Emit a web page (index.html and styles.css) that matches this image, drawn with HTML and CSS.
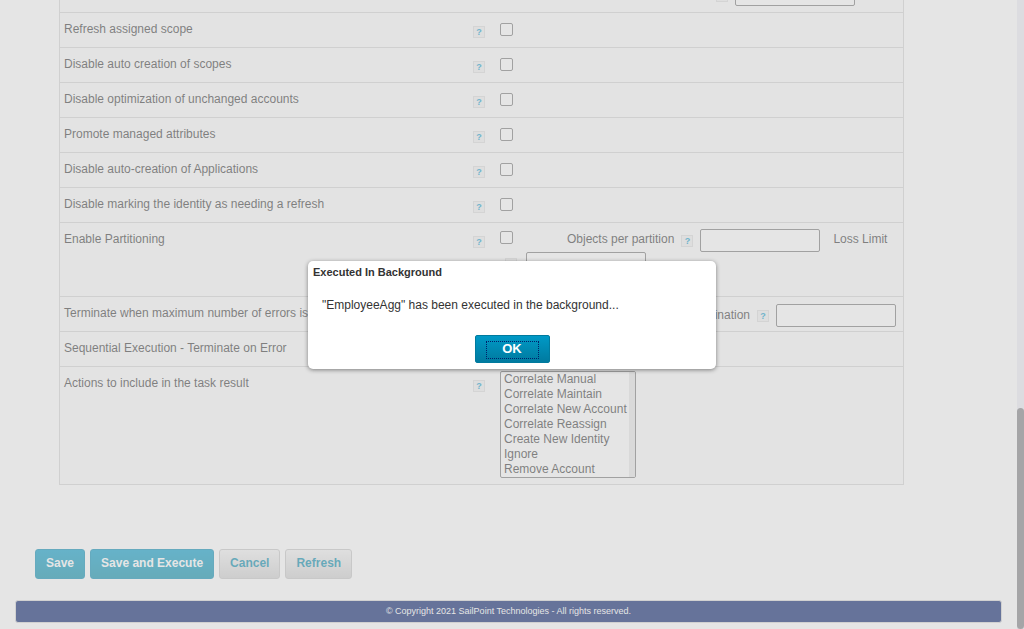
FILE: index.html
```html
<!DOCTYPE html>
<html lang="en">
<head>
  <meta charset="UTF-8">
  <title>Edit Task</title>
  <link rel="stylesheet" href="styles.css">
</head>
<body>

  <div class="page">
    <div class="content">
      <div class="form-table">
        <!-- row scrolled off the top -->
        <div class="row row-cut">
          <div class="label"></div>
          <div class="help-cell"><span class="help"></span></div>
          <div class="field field-cut">
            <span class="help"></span>
            <input type="text" class="text-input">
          </div>
        </div>

        <div class="row">
          <div class="label">Refresh assigned scope</div>
          <div class="help-cell"><span class="help">?</span></div>
          <div class="field"><input type="checkbox" class="check"></div>
        </div>
        <div class="row">
          <div class="label">Disable auto creation of scopes</div>
          <div class="help-cell"><span class="help">?</span></div>
          <div class="field"><input type="checkbox" class="check"></div>
        </div>
        <div class="row">
          <div class="label">Disable optimization of unchanged accounts</div>
          <div class="help-cell"><span class="help">?</span></div>
          <div class="field"><input type="checkbox" class="check"></div>
        </div>
        <div class="row">
          <div class="label">Promote managed attributes</div>
          <div class="help-cell"><span class="help">?</span></div>
          <div class="field"><input type="checkbox" class="check"></div>
        </div>
        <div class="row">
          <div class="label">Disable auto-creation of Applications</div>
          <div class="help-cell"><span class="help">?</span></div>
          <div class="field"><input type="checkbox" class="check"></div>
        </div>
        <div class="row">
          <div class="label">Disable marking the identity as needing a refresh</div>
          <div class="help-cell"><span class="help">?</span></div>
          <div class="field"><input type="checkbox" class="check"></div>
        </div>

        <div class="row row-partition">
          <div class="label">Enable Partitioning</div>
          <div class="help-cell"><span class="help">?</span></div>
          <div class="field field-partition">
            <div class="line">
              <input type="checkbox" class="check">
              <span class="opt-label opt-objects">Objects per partition</span>
              <span class="help">?</span>
              <input type="text" class="text-input">
              <span class="opt-label opt-loss">Loss Limit</span>
            </div>
            <div class="line line-second">
              <span class="help">?</span>
              <input type="text" class="text-input">
            </div>
          </div>
        </div>

        <div class="row row-terminate">
          <div class="label">Terminate when maximum number of errors is reached</div>
          <div class="help-cell"><span class="help">?</span></div>
          <div class="field field-terminate">
            <span class="opt-label">Maximum errors before termination</span>
            <span class="help">?</span>
            <input type="text" class="text-input">
          </div>
        </div>
        <div class="row">
          <div class="label">Sequential Execution - Terminate on Error</div>
          <div class="help-cell"><span class="help">?</span></div>
          <div class="field"><input type="checkbox" class="check"></div>
        </div>
        <div class="row row-actions">
          <div class="label">Actions to include in the task result</div>
          <div class="help-cell"><span class="help">?</span></div>
          <div class="field">
            <div class="listbox">
              <div class="options">
                <div>Correlate Manual</div>
                <div>Correlate Maintain</div>
                <div>Correlate New Account</div>
                <div>Correlate Reassign</div>
                <div>Create New Identity</div>
                <div>Ignore</div>
                <div>Remove Account</div>
              </div>
              <div class="list-scroll"></div>
            </div>
          </div>
        </div>
      </div>

      <div class="buttons">
        <button class="btn btn-primary">Save</button>
        <button class="btn btn-primary">Save and Execute</button>
        <button class="btn btn-plain">Cancel</button>
        <button class="btn btn-plain">Refresh</button>
      </div>

      <div class="footer">© Copyright 2021 SailPoint Technologies - All rights reserved.</div>
    </div>

    <div class="mask"></div>

    <div class="dialog">
      <div class="dialog-title">Executed In Background</div>
      <div class="dialog-msg">"EmployeeAgg" has been executed in the background...</div>
      <div class="dialog-actions">
        <button class="ok-btn"><span class="ok-focus">OK</span></button>
      </div>
    </div>
  </div>

  <div class="scrollbar"><div class="thumb"></div></div>

</body>
</html>
```

FILE: styles.css
```css
html, body {
  height: 100%;
}

body {
  margin: 0;
  display: flex;
  overflow: hidden;
  font-family: "Liberation Sans", Arial, sans-serif;
  font-size: 12px;
  color: #333;
  background: #fff;
}

.page {
  position: relative;
  flex: 1;
  height: 629px;
  overflow: hidden;
}

.content {
  padding-left: 15px;
  padding-right: 15px;
}

/* form table */
.form-table {
  width: 845px;
  margin-left: 44px;
  border-left: 1px solid #d4d4d4;
  border-right: 1px solid #d4d4d4;
  background: #fbfbfb;
  box-sizing: border-box;
}

.row {
  display: flex;
  height: 35px;
  box-sizing: border-box;
  border-bottom: 1px solid #d4d4d4;
}

.row-cut {
  height: 13px;
  overflow: hidden;
  align-items: flex-end;
}

.row-partition {
  height: 74px;
}

.row-actions {
  height: 118px;
}

.label {
  width: 409px;
  padding: 9px 0 0 4px;
  box-sizing: border-box;
  white-space: nowrap;
  overflow: hidden;
}

.row-cut .label {
  padding: 0;
}

.help-cell {
  flex: 0 0 31px;
  padding-top: 13px;
  padding-left: 4px;
  box-sizing: border-box;
}

.row-cut .help-cell {
  padding: 0 0 10px 4px;
}

.help {
  display: inline-block;
  vertical-align: top;
  flex: none;
  width: 10px;
  height: 10px;
  border: 1px solid #ddd;
  background: #f0f0f0;
  color: #0a9ccc;
  font-size: 9px;
  font-weight: bold;
  line-height: 11px;
  text-align: center;
}

.field {
  flex: 1;
  display: flex;
}

.field-cut {
  align-items: flex-end;
  padding-left: 216px;
  gap: 7px;
}

.field-cut .help {
  margin-bottom: 10px;
}

.field-cut .text-input {
  margin-bottom: 6px;
}

.check {
  appearance: none;
  width: 13px;
  height: 13px;
  margin: 10px 0 0;
  border: 1px solid #767676;
  border-radius: 2px;
  background: #fff;
}

.text-input {
  width: 120px;
  height: 23px;
  box-sizing: border-box;
  margin: 0;
  border: 1px solid #767676;
  border-radius: 2px;
  background: #fff;
  flex: none;
}

.field-partition {
  flex-direction: column;
}

.line {
  display: flex;
  align-items: flex-start;
}

.line .check {
  margin-top: 8px;
}

.opt-label {
  white-space: nowrap;
}

.opt-objects {
  margin: 9px 0 0 54px;
}

.line .help {
  margin: 12px 7px 0 7px;
}

.line .text-input {
  margin-top: 6px;
}

.opt-loss {
  margin: 9px 0 0 13px;
}

.line-second .help {
  margin: 6px 9px 0 5px;
}

.line-second .text-input {
  margin-top: 0;
}

.field-terminate {
  justify-content: flex-end;
  padding: 7px 7px 0 0;
  align-items: flex-start;
}

.field-terminate .opt-label {
  margin-top: 4px;
}

.field-terminate .help {
  margin: 6px 7px 0;
}

.listbox {
  display: flex;
  width: 136px;
  height: 107px;
  margin-top: 4px;
  box-sizing: border-box;
  border: 1px solid #767676;
  border-radius: 2px;
  background: #fff;
  overflow: hidden;
}

.options {
  flex: 1;
  padding-left: 3px;
  line-height: 15px;
  white-space: nowrap;
  overflow: hidden;
}

.list-scroll {
  flex: 0 0 6px;
  background: #e6e6e6;
}

/* bottom buttons */
.buttons {
  display: flex;
  gap: 5px;
  margin: 64px 0 0 20px;
}

.btn {
  height: 30px;
  padding: 0 10px 2px;
  border-radius: 3px;
  font-family: inherit;
  font-size: 12px;
  font-weight: bold;
}

.btn-primary {
  color: #fff;
  border: 1px solid #0088b0;
  background: linear-gradient(to bottom, #0099c6, #008ba8);
}

.btn-plain {
  color: #0087a8;
  border: 1px solid #c4c4c4;
  background: linear-gradient(to bottom, #f2f2f2, #cfcfcf);
}

.footer {
  height: 23px;
  margin-top: 21px;
  box-sizing: border-box;
  border: 1px solid #d6d6d6;
  border-radius: 3px;
  background: #001a68;
  color: #fff;
  font-size: 9px;
  line-height: 21px;
  text-align: center;
}

/* modal */
.mask {
  position: absolute;
  inset: 0;
  background: #ccc;
  opacity: 0.5;
}

.dialog {
  position: absolute;
  left: 308px;
  top: 261px;
  width: 408px;
  height: 108px;
  border-radius: 5px;
  background: #fff;
  box-shadow: 0 1px 4px rgba(0, 0, 0, 0.45);
}

.dialog-title {
  padding: 5px 0 0 5px;
  font-size: 11px;
  font-weight: bold;
}

.dialog-msg {
  margin-top: 20px;
  padding-left: 14px;
}

.dialog-actions {
  display: flex;
  justify-content: center;
  margin-top: 23px;
}

.ok-btn {
  width: 75px;
  height: 28px;
  padding: 0;
  border: 1px solid #007a9e;
  border-radius: 2px;
  background: linear-gradient(to bottom, #0099c6, #007a9f);
  color: #fff;
  font-family: inherit;
  font-size: 13px;
  font-weight: bold;
}

.ok-focus {
  display: block;
  margin: 5px 10px;
  height: 16px;
  line-height: 14px;
  border: 1px dotted #00206a;
}

.scrollbar {
  flex: 0 0 7px;
  height: 629px;
  display: flex;
  flex-direction: column;
  justify-content: flex-end;
  background: #dcdce0;
}

.thumb {
  height: 221px;
  border-radius: 4px;
  background: #a5a5a7;
}
```
